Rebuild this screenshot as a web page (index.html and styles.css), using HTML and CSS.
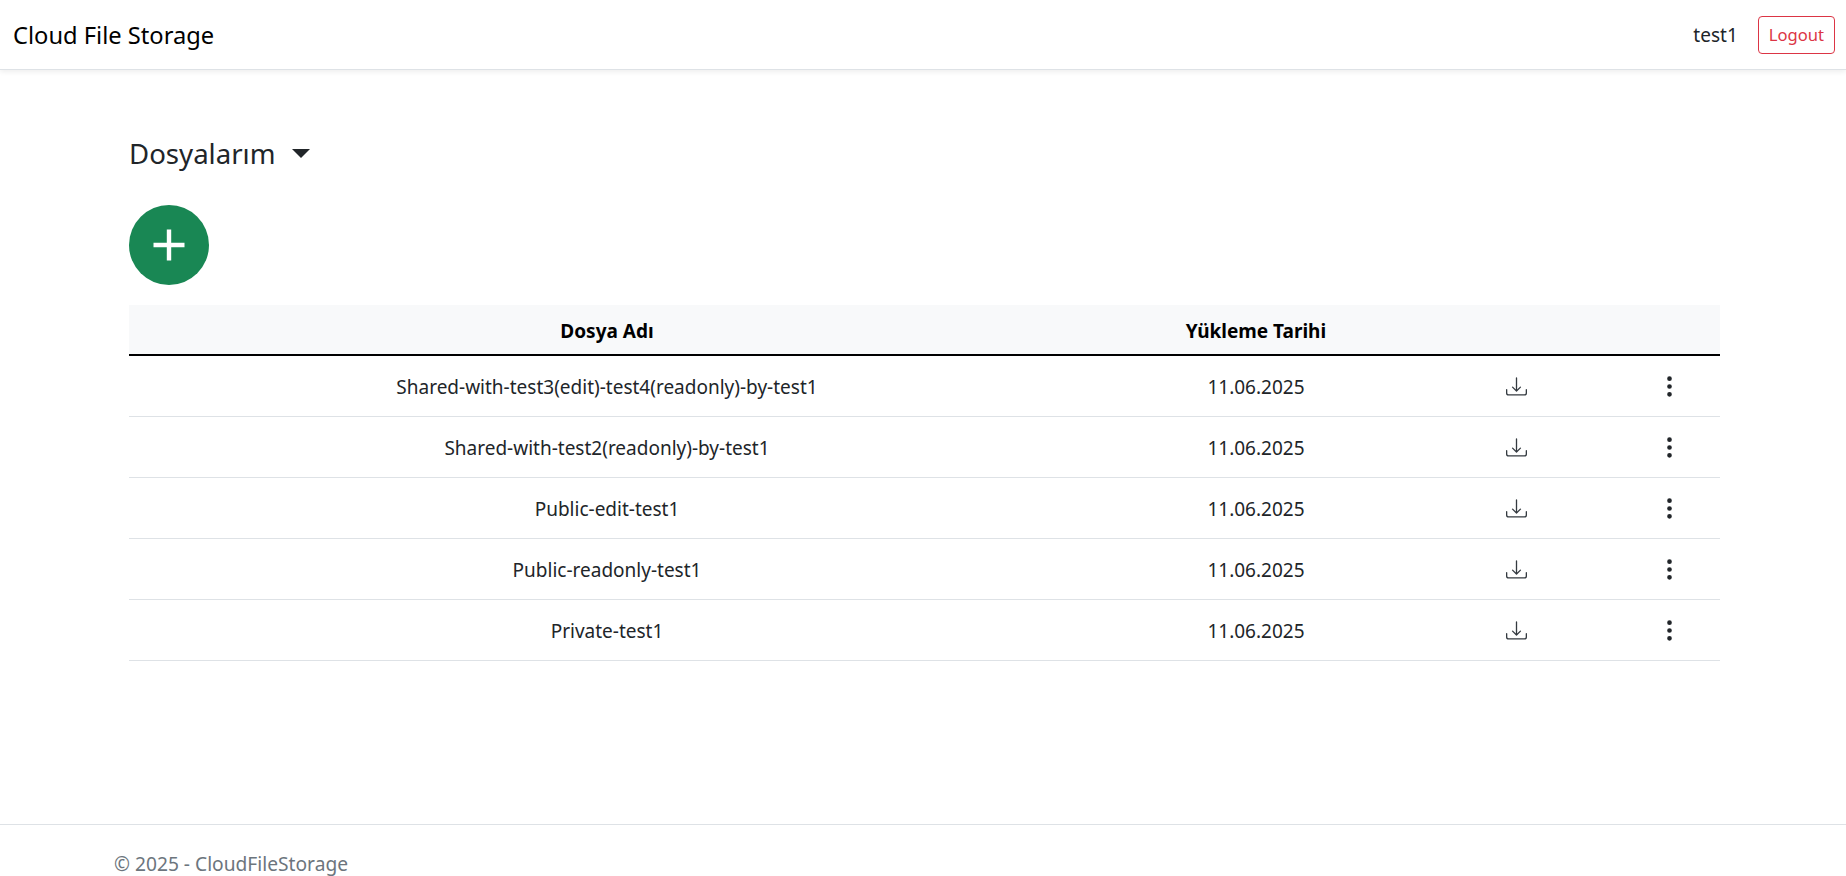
FILE: index.html
```html
<!DOCTYPE html>
<html lang="en">
<head>
<meta charset="UTF-8">
<meta name="viewport" content="width=device-width, initial-scale=1.0">
<title>Cloud File Storage</title>
<link rel="stylesheet" href="styles.css">
</head>
<body>

<nav class="navbar">
    <a class="brand" href="#">Cloud File Storage</a>
    <div class="nav-right">
        <span class="username">test1</span>
        <button class="btn-logout">Logout</button>
    </div>
</nav>

<main class="content">
    <div class="title-row">
        <h2 class="title">Dosyalarım</h2>
        <span class="caret"></span>
    </div>

    <button class="btn-add" aria-label="Ekle">
        <svg viewBox="0 0 32 34" width="32" height="34"><path d="M16 1.5v31M.5 17h31" stroke="#fff" stroke-width="4.4" fill="none"/></svg>
    </button>

    <table class="files">
        <colgroup>
            <col class="col-name">
            <col class="col-date">
            <col class="col-down">
            <col class="col-menu">
        </colgroup>
        <thead>
            <tr>
                <th>Dosya Adı</th>
                <th>Yükleme Tarihi</th>
                <th></th>
                <th></th>
            </tr>
        </thead>
        <tbody>
            <tr>
                <td>Shared-with-test3(edit)-test4(readonly)-by-test1</td>
                <td>11.06.2025</td>
                <td class="icon-cell"><svg class="icon-down" viewBox="0 0 16 16"><use href="#down"/></svg></td>
                <td class="icon-cell menu-cell"><svg class="icon-dots" viewBox="0 0 16 16"><use href="#dots"/></svg></td>
            </tr>
            <tr>
                <td>Shared-with-test2(readonly)-by-test1</td>
                <td>11.06.2025</td>
                <td class="icon-cell"><svg class="icon-down" viewBox="0 0 16 16"><use href="#down"/></svg></td>
                <td class="icon-cell menu-cell"><svg class="icon-dots" viewBox="0 0 16 16"><use href="#dots"/></svg></td>
            </tr>
            <tr>
                <td>Public-edit-test1</td>
                <td>11.06.2025</td>
                <td class="icon-cell"><svg class="icon-down" viewBox="0 0 16 16"><use href="#down"/></svg></td>
                <td class="icon-cell menu-cell"><svg class="icon-dots" viewBox="0 0 16 16"><use href="#dots"/></svg></td>
            </tr>
            <tr>
                <td>Public-readonly-test1</td>
                <td>11.06.2025</td>
                <td class="icon-cell"><svg class="icon-down" viewBox="0 0 16 16"><use href="#down"/></svg></td>
                <td class="icon-cell menu-cell"><svg class="icon-dots" viewBox="0 0 16 16"><use href="#dots"/></svg></td>
            </tr>
            <tr>
                <td>Private-test1</td>
                <td>11.06.2025</td>
                <td class="icon-cell"><svg class="icon-down" viewBox="0 0 16 16"><use href="#down"/></svg></td>
                <td class="icon-cell menu-cell"><svg class="icon-dots" viewBox="0 0 16 16"><use href="#dots"/></svg></td>
            </tr>
        </tbody>
    </table>
</main>

<footer class="footer">© 2025 - CloudFileStorage</footer>

<svg class="defs" width="0" height="0">
    <symbol id="down" viewBox="0 0 16 16">
        <path fill="currentColor" d="M.5 9.9a.5.5 0 0 1 .5.5v2.5a1 1 0 0 0 1 1h12a1 1 0 0 0 1-1v-2.5a.5.5 0 0 1 1 0v2.5a2 2 0 0 1-2 2H2a2 2 0 0 1-2-2v-2.5a.5.5 0 0 1 .5-.5z"/>
        <path fill="currentColor" d="M7.646 11.854a.5.5 0 0 0 .708 0l3-3a.5.5 0 0 0-.708-.708L8.5 10.293V1.5a.5.5 0 0 0-1 0v8.793L5.354 8.146a.5.5 0 1 0-.708.708l3 3z"/>
    </symbol>
    <symbol id="dots" viewBox="0 0 16 16">
        <path fill="currentColor" d="M9.5 13a1.5 1.5 0 1 1-3 0 1.5 1.5 0 0 1 3 0zm0-5a1.5 1.5 0 1 1-3 0 1.5 1.5 0 0 1 3 0zm0-5a1.5 1.5 0 1 1-3 0 1.5 1.5 0 0 1 3 0z"/>
    </symbol>
</svg>

</body>
</html>
```

FILE: styles.css
```css
html, body {
    height: 100%;
}
body {
    margin: 0;
    display: flex;
    flex-direction: column;
    height: 876px;
    overflow: hidden;
    font-family: "Noto Sans", Arial, sans-serif;
    font-size: 19px;
    color: #212529;
    background: #fff;
}
.navbar {
    height: 69px;
    flex-shrink: 0;
    display: flex;
    align-items: center;
    justify-content: space-between;
    padding: 0 11px 0 13px;
    border-bottom: 1px solid #dee2e6;
    box-shadow: 0 2px 5px rgba(0, 0, 0, 0.07);
}
.brand {
    font-size: 23.7px;
    color: #000;
    text-decoration: none;
}
.nav-right {
    display: flex;
    align-items: center;
    gap: 20px;
}
.username {
    color: #212529;
}
.btn-logout {
    height: 38px;
    padding: 0 10px;
    font-family: inherit;
    font-size: 16.6px;
    color: #dc3545;
    background: none;
    border: 1px solid #dc3545;
    border-radius: 4px;
}
.content {
    flex: 1;
    padding: 62px 126px 0 129px;
}
.title-row {
    display: flex;
    align-items: center;
    gap: 16px;
    height: 42px;
}
.title {
    margin: 0;
    font-size: 27.6px;
    font-weight: 400;
}
.caret {
    width: 0;
    height: 0;
    border-top: 9px solid #212529;
    border-left: 9px solid transparent;
    border-right: 9px solid transparent;
}
.btn-add {
    display: flex;
    align-items: center;
    justify-content: center;
    width: 80px;
    height: 80px;
    margin-top: 31px;
    padding: 0;
    background: #198754;
    border: none;
    border-radius: 50%;
}
.files {
    width: 1591px;
    margin-top: 20px;
    border-collapse: collapse;
    table-layout: fixed;
    text-align: center;
}
.col-name { width: 956px; }
.col-date { width: 342px; }
.col-down { width: 178px; }
.col-menu { width: 115px; }
.files th {
    height: 47px;
    padding: 2px 0 0;
    font-weight: 700;
    color: #000;
    background: #f8f9fa;
    border-bottom: 2px solid #000;
}
.files td {
    height: 58px;
    padding: 2px 0 0;
    border-bottom: 1px solid #dee2e6;
}
.files .icon-cell {
    padding-top: 0;
}
.files .menu-cell {
    padding-left: 13px;
}
.files svg {
    display: block;
    margin: 0 auto;
}
.icon-down {
    width: 21px;
    height: 21px;
    color: #343a40;
}
.icon-dots {
    width: 25px;
    height: 25px;
    color: #212529;
}
.footer {
    height: 51px;
    flex-shrink: 0;
    padding: 0 114px;
    font-size: 19.2px;
    line-height: 78px;
    color: #6c757d;
    border-top: 1px solid #dee2e6;
}
.defs {
    position: absolute;
}
```
